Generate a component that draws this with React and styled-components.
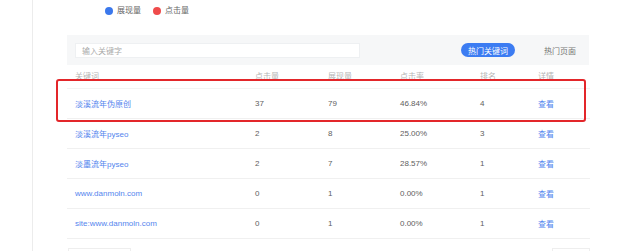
import React from "react";
import styled, { createGlobalStyle } from "styled-components";

const Global = createGlobalStyle`
  html, body { margin: 0; padding: 0; background: #fff; overflow: hidden; }
  body { font-family: "Liberation Sans", "Noto Sans CJK SC", sans-serif; }
`;

const Page = styled.div`
  width: 640px;
  height: 251px;
  display: flex;
  align-items: flex-start;
  overflow: hidden;
`;

const Card = styled.div`
  margin-left: 32px;
  border-left: 1px solid #ececec;
  padding-left: 34px;
  width: 522px;
  min-height: 251px;
  flex-shrink: 0;
`;

const Legend = styled.div`
  height: 35px;
  display: flex;
  align-items: flex-start;
  padding-top: 6px;
  box-sizing: border-box;
  padding-left: 38px;
  gap: 12px;
`;

const LegendItem = styled.div`
  display: flex;
  align-items: center;
  gap: 4px;
  font-size: 8px;
  color: #666;
  line-height: 10px;
`;

const Dot = styled.span`
  width: 8px;
  height: 8px;
  border-radius: 50%;
  background: ${(p) => p.$color};
`;

const FilterBar = styled.div`
  height: 30px;
  background: #f6f7f8;
  display: flex;
  align-items: center;
  padding: 0 6px 0 8px;
  box-sizing: border-box;
`;

const Input = styled.div`
  width: 285px;
  height: 15px;
  background: #fff;
  border: 1px solid #eef0f2;
  box-sizing: border-box;
  font-size: 8px;
  color: #aaa;
  padding-left: 6px;
  display: flex;
  align-items: center;
`;

const Tabs = styled.div`
  margin-left: auto;
  display: flex;
  align-items: center;
  gap: 22px;
`;

const Tab = styled.div`
  height: 14px;
  padding: 0 7px;
  border-radius: 7px;
  font-size: 8px;
  display: flex;
  align-items: center;
  background: ${(p) => (p.$active ? "#3c7cf2" : "transparent")};
  color: ${(p) => (p.$active ? "#fff" : "#777")};
`;

const Table = styled.div`
  position: relative;
`;

const Row = styled.div`
  display: grid;
  grid-template-columns: 180px 73px 72px 80px 58px 1fr;
  height: ${(p) => (p.$head ? "24px" : "30px")};
  align-items: center;
  border-bottom: 1px solid ${(p) => (p.$head ? "#f3f3f3" : "#f0f0f0")};
  box-sizing: border-box;
  width: 523px;
`;

const Cell = styled.div`
  padding-left: 8px;
  font-size: 8px;
  color: ${(p) => (p.$head ? "#b5b5b5" : p.$link ? "#5485ee" : "#606060")};
  padding-bottom: ${(p) => (p.$head ? "2px" : "0")};
  white-space: nowrap;
`;

const Highlight = styled.div`
  position: absolute;
  left: -11px;
  top: 14px;
  width: 530px;
  height: 43px;
  border: 2px solid #e3262a;
  border-radius: 3px;
  box-sizing: border-box;
  pointer-events: none;
`;

const Footer = styled.div`
  margin-top: 9px;
  display: flex;
  justify-content: space-between;
  width: 523px;
`;

const FootBox = styled.div`
  width: ${(p) => p.$w}px;
  height: 20px;
  border: 1px solid #eee;
  box-sizing: border-box;
  margin-left: ${(p) => p.$ml || 0}px;
`;

const rows = [
  ["淡溪流年伪原创", "37", "79", "46.84%", "4"],
  ["淡溪流年pyseo", "2", "8", "25.00%", "3"],
  ["淡墨流年pyseo", "2", "7", "28.57%", "1"],
  ["www.danmoln.com", "0", "1", "0.00%", "1"],
  ["site:www.danmoln.com", "0", "1", "0.00%", "1"],
];

export default function App() {
  return (
    <>
      <Global />
      <Page>
        <Card>
          <Legend>
            <LegendItem>
              <Dot $color="#3b78ec" />
              展现量
            </LegendItem>
            <LegendItem>
              <Dot $color="#ef4b4b" />
              点击量
            </LegendItem>
          </Legend>
          <FilterBar>
            <Input>输入关键字</Input>
            <Tabs>
              <Tab $active>热门关键词</Tab>
              <Tab>热门页面</Tab>
            </Tabs>
          </FilterBar>
          <Table>
            <Row $head>
              <Cell $head>关键词</Cell>
              <Cell $head>点击量</Cell>
              <Cell $head>展现量</Cell>
              <Cell $head>点击率</Cell>
              <Cell $head>排名</Cell>
              <Cell $head>详情</Cell>
            </Row>
            {rows.map((r) => (
              <Row key={r[0]}>
                <Cell $link>{r[0]}</Cell>
                <Cell>{r[1]}</Cell>
                <Cell>{r[2]}</Cell>
                <Cell>{r[3]}</Cell>
                <Cell>{r[4]}</Cell>
                <Cell $link>查看</Cell>
              </Row>
            ))}
            <Highlight />
          </Table>
          <Footer>
            <FootBox $w={63} $ml={1} />
            <FootBox $w={38} />
          </Footer>
        </Card>
      </Page>
    </>
  );
}
